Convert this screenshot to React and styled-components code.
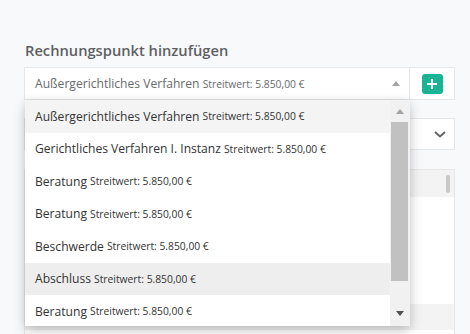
import styled, { createGlobalStyle } from 'styled-components'

const GlobalStyle = createGlobalStyle`
    body {
        margin: 0;
        background: #f8f9fb;
        font-family: "Open Sans", "Liberation Sans", sans-serif;
    }
`

const Page = styled.div`
    width: 470px;
    height: 334px;
    overflow: hidden;
    box-sizing: border-box;
    padding: 40px 15px 0 24px;
`

const Title = styled.h3`
    margin: 0 0 7px 1px;
    font-size: 14.7px;
    line-height: 20px;
    font-weight: 600;
    color: #5d6063;
`

const InputGroup = styled.div`
    display: flex;
    height: 33px;
`

const SelectBox = styled.div`
    position: relative;
    flex: 1;
    display: flex;
    align-items: center;
    justify-content: space-between;
    padding: 0 9px 0 10px;
    background: #fff;
    border: 1px solid #e5e6e7;
    font-size: 12.1px;
    color: #676a6c;
    z-index: 2;
`

const Small = styled.span`
    font-size: 10.3px;
`

const Caret = styled.span`
    width: 0;
    height: 0;
    border-left: 4px solid transparent;
    border-right: 4px solid transparent;
    border-${p => (p.$down ? 'top' : 'bottom')}: 5px solid ${p => p.$color || '#a5a5a5'};
`

const AddCell = styled.div`
    width: 46px;
    margin-left: -1px;
    box-sizing: border-box;
    display: flex;
    align-items: center;
    justify-content: center;
    background: #fff;
    border: 1px solid #e5e6e7;
`

const AddButton = styled.button`
    width: 21px;
    height: 20px;
    padding: 0;
    border: none;
    border-radius: 3px;
    background: #1ab394;
    display: flex;
    align-items: center;
    justify-content: center;
`

const Dropdown = styled.div`
    position: absolute;
    top: calc(100% + 1px);
    left: 0;
    width: calc(100% + 1px);
    height: 226px;
    display: flex;
    background: #fff;
    box-shadow: 0 6px 12px rgba(0, 0, 0, 0.18), 0 0 8px rgba(0, 0, 0, 0.08);
`

const List = styled.ul`
    flex: 1;
    margin: 0;
    padding: 0;
    list-style: none;
    overflow: hidden;
`

const Option = styled.li`
    height: 32.5px;
    display: flex;
    align-items: center;
    gap: 3px;
    padding-left: 10px;
    font-size: 12.1px;
    color: #333;
    white-space: nowrap;
    background: ${p => (p.$hover ? '#f4f4f4' : p.$active ? '#eeeeee' : '#fff')};
`

const Scrollbar = styled.div`
    width: 20px;
    display: flex;
    flex-direction: column;
    align-items: stretch;
    background: #f1f1f1;
`

const ScrollArrow = styled.div`
    height: ${p => p.$h}px;
    box-sizing: border-box;
    display: flex;
    align-items: ${p => (p.$bottom ? 'flex-end' : 'center')};
    justify-content: center;
    padding: 0 1px ${p => (p.$bottom ? 10 : 0)}px 0;
`

const Thumb = styled.div`
    height: 159px;
    margin: 0 2px 0 1px;
    background: #c1c1c1;
`

const SecondSelect = styled.div`
    margin-top: 18px;
    height: 32px;
    box-sizing: border-box;
    display: flex;
    align-items: center;
    justify-content: flex-end;
    padding-right: 8px;
    background: #fff;
    border: 1px solid #e5e6e7;
`

const Table = styled.div`
    margin-top: 19px;
    background: #fff;
    border: 1px solid #e7e7e7;
    border-bottom: none;
`

const TableRow = styled.div`
    height: ${p => p.$h}px;
    display: flex;
    align-items: center;
    justify-content: flex-end;
    padding-right: 4px;
    background: ${p => (p.$gray ? '#f3f3f3' : '#fff')};
`

const MiniThumb = styled.div`
    width: 4px;
    height: 18px;
    border-radius: 2px;
    background: #c8c8c8;
`

const options = [
    { name: 'Außergerichtliches Verfahren', hover: true },
    { name: 'Gerichtliches Verfahren I. Instanz' },
    { name: 'Beratung' },
    { name: 'Beratung' },
    { name: 'Beschwerde' },
    { name: 'Abschluss', active: true },
    { name: 'Beratung' },
]

export default function App() {
    return (
        <Page>
            <GlobalStyle />
            <Title>Rechnungspunkt hinzufügen</Title>
            <InputGroup>
                <SelectBox>
                    <span>
                        Außergerichtliches Verfahren <Small>Streitwert: 5.850,00 €</Small>
                    </span>
                    <Caret />
                    <Dropdown>
                        <List>
                            {options.map((o, i) => (
                                <Option key={i} $hover={o.hover} $active={o.active}>
                                    {o.name}
                                    <Small>Streitwert: 5.850,00 €</Small>
                                </Option>
                            ))}
                        </List>
                        <Scrollbar>
                            <ScrollArrow $h={22}>
                                <Caret $color="#a3a3a3" />
                            </ScrollArrow>
                            <Thumb />
                            <ScrollArrow $h={45} $bottom>
                                <Caret $down $color="#505050" />
                            </ScrollArrow>
                        </Scrollbar>
                    </Dropdown>
                </SelectBox>
                <AddCell>
                    <AddButton aria-label="Hinzufügen">
                        <svg width="10" height="10" viewBox="0 0 10 10">
                            <path d="M5 0v10M0 5h10" stroke="#fff" strokeWidth="2" />
                        </svg>
                    </AddButton>
                </AddCell>
            </InputGroup>
            <SecondSelect>
                <svg width="12" height="7" viewBox="0 0 12 7">
                    <path d="M1 1l5 4.5L11 1" fill="none" stroke="#666" strokeWidth="2" />
                </svg>
            </SecondSelect>
            <Table>
                <TableRow $h={27} $gray>
                    <MiniThumb />
                </TableRow>
                <TableRow $h={107} />
                <TableRow $h={26} $gray />
                <TableRow $h={30} />
            </Table>
        </Page>
    )
}
